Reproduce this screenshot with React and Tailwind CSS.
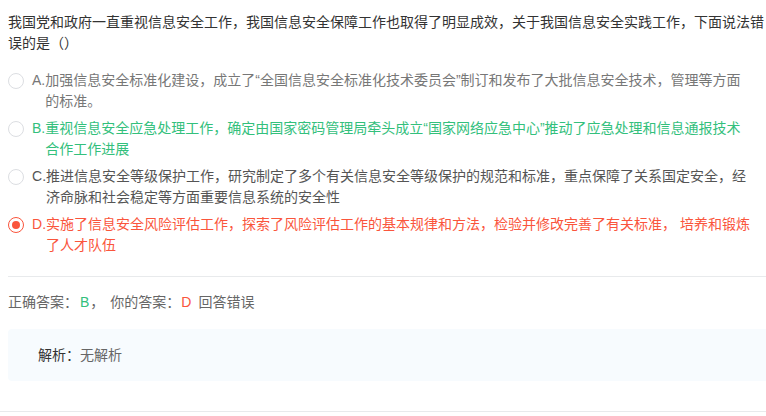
const options = [
  {
    key: "A",
    text: "加强信息安全标准化建设，成立了“全国信息安全标准化技术委员会”制订和发布了大批信息安全技术，管理等方面的标准。",
    color: "text-[#777777]",
    state: "idle",
  },
  {
    key: "B",
    text: "重视信息安全应急处理工作，确定由国家密码管理局牵头成立“国家网络应急中心”推动了应急处理和信息通报技术合作工作进展",
    color: "text-[#33c07c]",
    state: "idle",
  },
  {
    key: "C",
    text: "推进信息安全等级保护工作，研究制定了多个有关信息安全等级保护的规范和标准，重点保障了关系国定安全，经济命脉和社会稳定等方面重要信息系统的安全性",
    color: "text-[#555555]",
    state: "idle",
  },
  {
    key: "D",
    text: "实施了信息安全风险评估工作，探索了风险评估工作的基本规律和方法，检验并修改完善了有关标准， 培养和锻炼了人才队伍",
    color: "text-[#fa553c]",
    state: "checked",
  },
];

const Radio = ({ checked }) =>
  checked ? (
    <span className="mt-[3px] flex h-4 w-4 items-center justify-center rounded-full border border-[#fa553c] bg-white">
      <span className="h-2 w-2 rounded-full bg-[#fa553c]"></span>
    </span>
  ) : (
    <span className="mt-[3px] block h-4 w-4 rounded-full border border-[#dcdee2] bg-white"></span>
  );

export default function App() {
  return (
    <div
      className="h-[416px] w-[766px] overflow-hidden bg-white text-[14px] leading-[21px]"
      style={{ fontFamily: '"Liberation Sans", "Noto Sans CJK SC", sans-serif' }}
    >
      <div className="pl-2 pt-3">
        <p className="text-[#333333]">
          我国党和政府一直重视信息安全工作，我国信息安全保障工作也取得了明显成效，关于我国信息安全实践工作，下面说法错误的是（）
        </p>

        <div className="mt-4 flex flex-col gap-[6px] pr-[14px]">
          {options.map((o) => (
            <div key={o.key} className={`flex items-start ${o.color}`}>
              <div className="w-6 shrink-0">
                <Radio checked={o.state === "checked"} />
              </div>
              <span className="shrink-0">{o.key}.</span>
              <span className="flex-1">{o.text}</span>
            </div>
          ))}
        </div>

        <div className="mt-5 h-px bg-[#e8eaec]"></div>

        <div className="mt-[15px] text-[#666666]">
          正确答案：<span className="ml-[2px] text-[#33c07c]">B</span>
          <span className="ml-[1px]">，</span>
          <span className="ml-[6px]">你的答案：</span>
          <span className="ml-[1px] text-[#fa553c]">D</span>
          <span className="ml-[7px]">回答错误</span>
        </div>

        <div className="mt-4 flex h-[52px] items-center rounded-l-[4px] bg-[#f7fbfe] pl-[30px]">
          <span className="text-[#333333]">解析：</span>
          <span className="text-[#666666]">无解析</span>
        </div>
      </div>

      <div className="mt-[30px] h-px bg-[#e8eaec]"></div>
    </div>
  );
}
